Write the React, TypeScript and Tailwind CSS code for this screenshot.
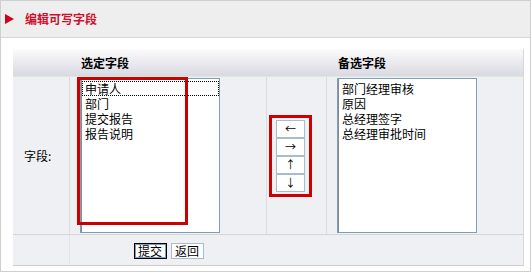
const CJK = "font-['SimSun','Noto_Sans_CJK_SC',sans-serif]";

function ListBox({ items, focused }: { items: string[]; focused?: boolean }) {
  return (
    <div className="h-[155px] w-[140px] border border-[#7f9db9] bg-white pl-[1px] pt-[2px] shadow-[inset_1px_0_0_#8a8a8a]">
      {items.map((item, i) => (
        <div
          key={item}
          className={`h-[15px] pl-[2px] text-[12px] leading-[13px] text-black ${
            focused && i === 0 ? "border border-dotted border-black" : "border border-transparent"
          }`}
        >
          {item}
        </div>
      ))}
    </div>
  );
}

function ArrowButton({ label }: { label: string }) {
  return (
    <div className="flex h-[18px] w-[29px] items-center justify-center border border-[#a7bccf] bg-white text-[11px] leading-none text-black">
      {label}
    </div>
  );
}

export default function App() {
  return (
    <div className={`h-[273px] w-[531px] bg-white ${CJK}`}>
      <div className="h-[272px] w-[531px] border border-[#cfcfcf]">
        {/* title band */}
        <div className="flex h-[37px] items-center gap-[11px] border-b border-[#d6d6d6] bg-[#eeeeee] pl-[4px]">
          <svg width="9" height="10" viewBox="0 0 9 10" className="mb-[1px]">
            <polygon points="0,0 9,5 0,10" fill="#d0021b" />
          </svg>
          <span className="mb-[1px] text-[12px] font-bold text-[#d0102e]">编辑可写字段</span>
        </div>

        {/* field table */}
        <div className="ml-[12px] mt-[11px] w-[511px] border-r border-[#d8d8d8] bg-[#eef0f3]">
          <div className="grid h-[28px] grid-cols-[57px_197px_60px_197px] border-b border-[#dfe9d8] bg-gradient-to-b from-[#fbfbfb] to-[#d9d9e2] text-[12px] font-bold text-black">
            <div />
            <div className="flex items-center pl-[11px]">选定字段</div>
            <div />
            <div className="flex items-center pl-[11px]">备选字段</div>
          </div>

          <div className="grid h-[158px] grid-cols-[57px_197px_60px_197px] border-b border-[#d6d6d6]">
            <div className="flex items-center border-r border-[#dcdcdc] pl-[11px] text-[12px] text-black">
              字段:
            </div>
            <div className="relative border-r border-[#dcdcdc] pl-[10px] pt-[1px]">
              <ListBox items={["申请人", "部门", "提交报告", "报告说明"]} focused />
              <div className="absolute left-[7px] top-[0px] h-[148px] w-[111px] border-[3px] border-[#cc0000]" />
            </div>
            <div className="flex items-center border-r border-[#dcdcdc] pl-[2px]">
              <div className="flex flex-col border-[3px] border-[#cc0000] px-[4px] py-[2px]">
                <ArrowButton label="←" />
                <ArrowButton label="→" />
                <ArrowButton label="↑" />
                <ArrowButton label="↓" />
              </div>
            </div>
            <div className="pl-[10px] pt-[1px]">
              <ListBox items={["部门经理审核", "原因", "总经理签字", "总经理审批时间"]} />
            </div>
          </div>

          <div className="grid h-[31px] grid-cols-[57px_197px_257px] border-b border-[#cfcfcf]">
            <div className="border-r border-[#e4e4e4]" />
            <div className="flex items-center justify-center gap-[4px] pt-[2px]">
              <button className="h-[16px] w-[33px] border border-black bg-white text-[12px] leading-none text-black shadow-[inset_0_0_0_1px_#7f9db9]">
                提交
              </button>
              <button className="h-[16px] w-[33px] border border-[#a7bccf] bg-white text-[12px] leading-none text-black">
                返回
              </button>
            </div>
            <div />
          </div>
        </div>
      </div>
    </div>
  );
}
